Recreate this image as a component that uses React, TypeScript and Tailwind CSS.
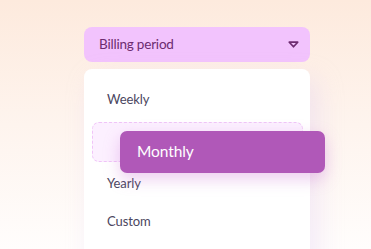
export default function App() {
  const font = { fontFamily: "Lato, 'Noto Sans', sans-serif" };
  return (
    <div
      className="w-[371px] h-[249px] overflow-hidden bg-gradient-to-b from-[#fdeadd] via-[#fef4ee] to-[#fffdfc] pl-[84px] pt-[27px]"
      style={font}
    >
      <div className="w-[226px] flex flex-col gap-[7px]">
        <button className="h-[35px] w-full rounded-[8px] bg-[#f2c3fd] flex items-center justify-between pl-[15px] pr-[11px]">
          <span className="text-[13.5px] text-[#6d2b70] tracking-[-0.2px]">Billing period</span>
          <svg width="11" height="7" viewBox="0 0 11 7" fill="none">
            <path d="M1.3 1.2h8.4L5.5 5.8z" stroke="#6d2b70" strokeWidth="1.7" strokeLinejoin="round" />
          </svg>
        </button>

        <div className="relative h-[200px] rounded-[8px] bg-white pt-[12px] shadow-[8px_10px_24px_rgba(220,200,240,0.35)]">
          <div className="h-[38px] flex items-center pl-[23px] text-[13px] text-[#4b4660] tracking-[-0.1px]">Weekly</div>
          <div className="mx-[8px] mr-[7px] my-[3px] h-[40px] rounded-[7px] border border-dashed border-[#f0c4f8] bg-[#fcf0ff]" />
          <div className="h-[38px] flex items-center pl-[23px] text-[13px] text-[#4b4660] tracking-[-0.1px]">Yearly</div>
          <div className="h-[38px] flex items-center pl-[23px] text-[13px] text-[#4b4660] tracking-[-0.1px]">Custom</div>

          <div className="absolute left-[36px] top-[62px] w-[205px] h-[42px] rounded-[7px] bg-[#b058b8] flex items-center pl-[17px] shadow-[0_6px_16px_rgba(200,110,210,0.35)]">
            <span className="text-[15.5px] text-white tracking-[-0.1px]">Monthly</span>
          </div>
        </div>
      </div>
    </div>
  );
}
